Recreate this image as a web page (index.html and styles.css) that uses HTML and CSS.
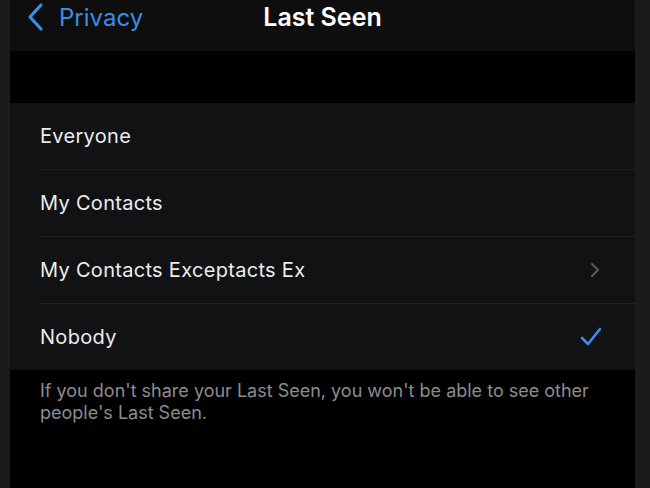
FILE: index.html
```html
<!DOCTYPE html>
<html lang="en">
<head>
    <meta charset="UTF-8">
    <title>Last Seen</title>
    <link rel="stylesheet" href="styles.css">
</head>
<body>
    <div class="screen">
        <div class="navbar">
            <div class="back">
                <svg class="back-icon" width="18" height="30" viewBox="0 0 18 30">
                    <path d="M15 3 L4 15 L15 27" fill="none" stroke="#3a8ee6" stroke-width="3.2" stroke-linecap="round" stroke-linejoin="round"/>
                </svg>
                <span>Privacy</span>
            </div>
            <div class="title">Last Seen</div>
        </div>
        <div class="spacer"></div>
        <div class="list">
            <div class="row"><span class="label">Everyone</span></div>
            <div class="row"><span class="label">My Contacts</span></div>
            <div class="row">
                <span class="label">My Contacts Exceptacts Ex</span>
                <svg class="chevron" width="10" height="16" viewBox="0 0 10 16">
                    <path d="M2 2 L8 8 L2 14" fill="none" stroke="#5a5a5c" stroke-width="2" stroke-linecap="round" stroke-linejoin="round"/>
                </svg>
            </div>
            <div class="row">
                <span class="label">Nobody</span>
                <svg class="check" width="22" height="20" viewBox="0 0 22 20">
                    <path d="M2 11 L8 17 L20 2" fill="none" stroke="#3a8ee6" stroke-width="2.6" stroke-linecap="round" stroke-linejoin="round"/>
                </svg>
            </div>
        </div>
        <div class="footer">
            If you don't share your Last Seen, you won't be able to see other people's Last Seen.
        </div>
    </div>
</body>
</html>
```
FILE: styles.css
```css
body {
    margin: 0;
    height: 488px;
    background-color: #1b1b1b;
    font-family: Inter, "Noto Sans", sans-serif;
    overflow: hidden;
}

.screen {
    margin: 0 15px 0 10px;
    height: 100%;
    background-color: #000;
    display: flex;
    flex-direction: column;
}

.navbar {
    height: 51px;
    background-color: #0e0e0e;
    position: relative;
    display: flex;
    align-items: center;
    justify-content: center;
}

.back {
    position: absolute;
    left: 16px;
    top: 2px;
    display: flex;
    align-items: center;
    gap: 15px;
    color: #3a8ee6;
    font-size: 24px;
}

.title {
    color: #fff;
    font-size: 25px;
    font-weight: 600;
    margin-top: -18px;
}

.spacer {
    height: 52px;
    background-color: #000;
}

.list {
    background-color: #111213;
}

.row {
    height: 66px;
    margin-left: 30px;
    padding-right: 33px;
    display: flex;
    align-items: center;
    justify-content: space-between;
    border-bottom: 1px solid #232326;
}

.row:last-child {
    border-bottom: none;
}

.label {
    color: #ececec;
    font-size: 20px;
    letter-spacing: 0.3px;
}

.chevron {
    margin-right: 2px;
}

.footer {
    padding: 10px 30px 0 30px;
    color: #8c8c8e;
    font-size: 18px;
    line-height: 22px;
}
```
